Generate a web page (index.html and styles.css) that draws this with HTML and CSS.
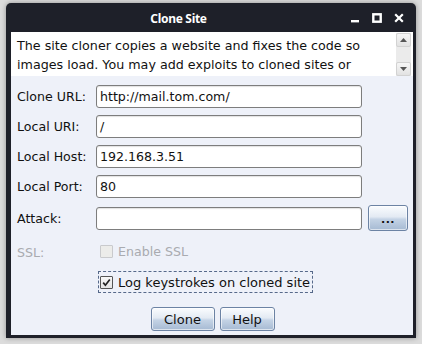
FILE: index.html
```html
<!DOCTYPE html>
<html>
<head>
<meta charset="utf-8">
<link rel="stylesheet" href="styles.css">
</head>
<body>
<div class="window">
  <div class="titlebar">
    <div class="title">Clone Site</div>
    <div class="controls">
      <svg class="ctl" width="10" height="10" viewBox="0 0 10 10"><rect x="1" y="7" width="8" height="2.4" fill="#fff"/></svg>
      <svg class="ctl" width="10" height="10" viewBox="0 0 10 10"><rect x="1.3" y="1.3" width="7.4" height="7.4" fill="none" stroke="#fff" stroke-width="2.4"/></svg>
      <svg class="ctl" width="10" height="10" viewBox="0 0 10 10"><path d="M1.2 1.2 L8.8 8.8 M8.8 1.2 L1.2 8.8" stroke="#fff" stroke-width="2.2"/></svg>
    </div>
  </div>
  <div class="content">
    <div class="desc">
      <div class="desc-text">The site cloner copies a website and fixes the code so<br>images load. You may add exploits to cloned sites or</div>
      <div class="scrollbar">
        <div class="sb-btn"><svg width="7" height="4" viewBox="0 0 7 4"><path d="M0 4 L3.5 0 L7 4 Z" fill="#555"/></svg></div>
        <div class="sb-track"></div>
        <div class="sb-btn"><svg width="7" height="4" viewBox="0 0 7 4"><path d="M0 0 L3.5 4 L7 0 Z" fill="#555"/></svg></div>
      </div>
    </div>
    <div class="form">
      <div class="label">Clone URL:</div>
      <div class="field">http://mail.tom.com/</div>
      <div></div>
      <div class="label">Local URI:</div>
      <div class="field">/</div>
      <div></div>
      <div class="label">Local Host:</div>
      <div class="field">192.168.3.51</div>
      <div></div>
      <div class="label">Local Port:</div>
      <div class="field">80</div>
      <div></div>
      <div class="label">Attack:</div>
      <div class="field"></div>
      <div class="btn dots">...</div>
      <div class="label disabled end">SSL:</div>
      <div class="check-line end">
        <span class="checkbox off"></span><span class="disabled">Enable SSL</span>
      </div>
      <div></div>
      <div></div>
      <div class="focus-wrap end">
        <div class="focus">
          <span class="checkbox on"><svg width="9" height="9" viewBox="0 0 9 9"><path d="M1.2 4.6 L3.4 7.2 L7.8 1.4" fill="none" stroke="#222" stroke-width="1.7"/></svg></span>
          <span class="log-text">Log keystrokes on cloned site</span>
        </div>
      </div>
    </div>
    <div class="buttons">
      <div class="btn clone">Clone</div>
      <div class="btn help">Help</div>
    </div>
  </div>
</div>
</body>
</html>
```
FILE: styles.css
```css
html, body {
  margin: 0;
  padding: 0;
}
body {
  width: 422px;
  height: 344px;
  background: #dcdcdc;
  font-family: "DejaVu Sans", sans-serif;
  font-size: 12.6px;
  color: #111;
  padding: 3px 0 0 6px;
  box-sizing: border-box;
  overflow: hidden;
}
.window {
  width: 410px;
  height: 335px;
  background: #1e2029;
  border-radius: 5px 5px 0 0;
  padding: 0 3px 3px 5px;
  box-sizing: border-box;
  display: flex;
  flex-direction: column;
  box-shadow: 0 0 5px rgba(0,0,0,0.35);
}
.titlebar {
  height: 29px;
  display: flex;
  align-items: center;
  flex: none;
}
.title {
  flex: 1;
  text-align: center;
  color: #fff;
  font-family: "Noto Sans", sans-serif;
  font-weight: 700;
  font-size: 12px;
  letter-spacing: -0.3px;
  margin-left: -5px;
  padding-top: 1px;
}
.controls {
  width: 63px;
  display: flex;
  align-items: center;
  gap: 12px;
  box-sizing: border-box;
  margin-left: -1px;
  padding-top: 1px;
}
.ctl { display: block; }
.content {
  flex: 1;
  min-height: 0;
  background: #eef1f9;
  display: flex;
  flex-direction: column;
}
.desc {
  height: 44px;
  background: #fff;
  display: flex;
  flex: none;
}
.desc-text {
  flex: 1;
  padding: 4px 0 0 6px;
  line-height: 19px;
  font-size: 12.7px;
  white-space: nowrap;
  overflow: hidden;
}
.scrollbar {
  width: 15px;
  margin: 1px 2px 0 0;
  display: flex;
  flex-direction: column;
  background: #e8e8e8;
}
.sb-btn {
  height: 14px;
  border: 1px solid #d2d2d2;
  border-radius: 2px;
  background: linear-gradient(#f6f6f6, #e2e2e2);
  box-sizing: border-box;
  display: flex;
  align-items: center;
  justify-content: center;
}
.sb-track {
  flex: 1;
  background: #ebebeb;
}
.form {
  display: grid;
  grid-template-columns: 73px 266px 40px;
  grid-template-rows: 23px 23px 23px 23px 26px 20px 28px;
  column-gap: 6px;
  row-gap: 7px;
  padding-left: 6px;
  margin-top: 9px;
}
.label {
  align-self: center;
  white-space: nowrap;
}
.label.end { align-self: end; margin-bottom: -2px; }
.field {
  height: 23px;
  align-self: center;
  background: #fff;
  border: 1px solid #7d7d7d;
  border-radius: 3px;
  box-sizing: border-box;
  box-shadow: inset 0 1px 1px rgba(0,0,0,0.12);
  padding: 0 3px;
  line-height: 21px;
  white-space: nowrap;
}
.disabled { color: #a9abb0; }
.end { align-self: end; }
.check-line {
  display: flex;
  align-items: center;
  gap: 5px;
  padding-left: 4px;
  height: 13px;
}
.checkbox {
  width: 13px;
  height: 13px;
  box-sizing: border-box;
  border: 1px solid #555;
  border-radius: 1px;
  display: flex;
  align-items: center;
  justify-content: center;
  flex: none;
}
.checkbox.off {
  border-color: #c9cacd;
  background: #ececea;
}
.checkbox.on {
  background: linear-gradient(#f7f7f7, #e4e4e4);
}
.focus-wrap {
  grid-column: 2 / 4;
  padding-left: 2px;
  display: flex;
}
.focus {
  height: 22px;
  box-sizing: border-box;
  border: 1px dashed #56698a;
  display: flex;
  align-items: center;
  gap: 5px;
  padding: 0 2px 0 1px;
  white-space: nowrap;
}
.log-text { font-size: 13px; }
.btn {
  box-sizing: border-box;
  border: 1px solid #6c83a4;
  border-radius: 3px;
  background: linear-gradient(#fafcfe 0%, #e3eaf3 45%, #c4d3e5 55%, #a6bad3 100%);
  box-shadow: inset 0 0 0 1px rgba(255,255,255,0.6);
  display: flex;
  align-items: center;
  justify-content: center;
  color: #111;
}
.dots {
  height: 26px;
  align-self: center;
  font-size: 11px;
  font-weight: 700;
  letter-spacing: 0.5px;
  padding-top: 3px;
}
.buttons {
  display: flex;
  justify-content: center;
  gap: 5px;
  margin-top: 14px;
  padding-left: 1px;
}
.clone { width: 64px; height: 24px; font-size: 13px; }
.help { width: 55px; height: 24px; font-size: 13px; }
```
